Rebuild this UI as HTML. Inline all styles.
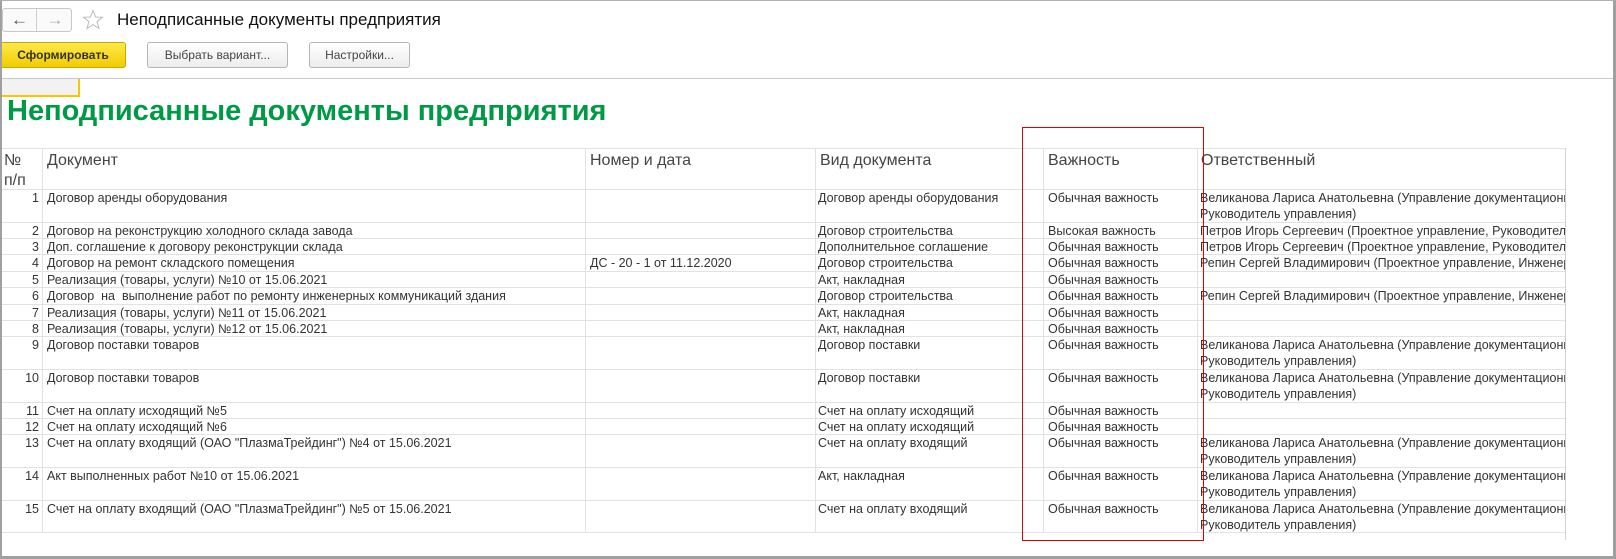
<!DOCTYPE html>
<html><head><meta charset="utf-8"><style>
*{margin:0;padding:0;box-sizing:border-box}
body{width:1616px;height:559px;background:#fff;font-family:"Liberation Sans",Arial,sans-serif;color:#333;position:relative;overflow:hidden}
.frame{position:absolute;left:0;top:0;width:1616px;height:559px;border:2px solid #a0a0a0;border-top:1px solid #b0b0b0;border-right:3px solid #a0a0a0;border-bottom:3px solid #a0a0a0;pointer-events:none;z-index:10}
.nav{position:absolute;left:2px;top:8px;width:70px;height:24px;border:1px solid #c8c8c8;border-radius:3px;background:#fafafa}
.nav div{position:absolute;top:0;height:22px;width:34px;text-align:center;font-size:17px;line-height:21px}
.btn{position:absolute;top:42px;height:26px;border:1px solid #b5b5b5;border-radius:3px;background:linear-gradient(#fff,#ececec);font-size:12px;line-height:24px;text-align:center;color:#444}
.abs{position:absolute;white-space:nowrap}
.t{position:absolute;left:0;top:148px;width:1566px;height:392px;overflow:hidden}
.hl{position:absolute;left:0;width:1566px;height:1px;background:#e2e2e2}
.vl{position:absolute;width:1px;background:#e2e2e2}
.c{position:absolute;font-size:12.5px;line-height:16px;white-space:pre;color:#333}
</style></head><body>
<div class="frame"></div>
<div class="nav"><div style="left:0;border-right:1px solid #d0d0d0;color:#555">&#8592;</div><div style="left:35px;color:#aaa">&#8594;</div></div>
<svg class="abs" style="left:82px;top:9px" width="22" height="22" viewBox="0 0 22 22"><polygon points="11,1.5 13.6,8 20.5,8.3 15.1,12.6 17,19.5 11,15.6 5,19.5 6.9,12.6 1.5,8.3 8.4,8" fill="none" stroke="#bbb" stroke-width="1"/></svg>
<div class="abs" style="left:117px;top:10px;font-size:17px;color:#111">Неподписанные документы предприятия</div>
<div class="btn" style="left:0;width:126px;background:linear-gradient(#ffe94a,#f2cc00);border-color:#c9a800;font-weight:bold;color:#333">Сформировать</div>
<div class="btn" style="left:147px;width:141px">Выбрать вариант...</div>
<div class="btn" style="left:309px;width:101px">Настройки...</div>
<div class="abs" style="left:0;top:78px;width:1616px;height:1px;background:#c8c8c8"></div>
<div class="abs" style="left:0;top:79px;width:80px;height:18px;background:#f2f2f2;border-right:2px solid #f5c800;border-bottom:2px solid #f5c800"></div>
<div class="abs" style="left:7px;top:95px;font-size:29px;font-weight:bold;color:#009a46">Неподписанные документы предприятия</div>
<div class="t" id="t"></div>
<div class="abs" style="left:1022px;top:127px;width:182px;height:414px;border:1px solid #e00000"></div>
<script>
var t=document.getElementById('t');
var cols=[42,585,815,1043,1197];
var rows=[
["1","Договор аренды оборудования","","Договор аренды оборудования","Обычная важность","Великанова Лариса Анатольевна (Управление документационного обеспечения,","Руководитель управления)"],
["2","Договор на реконструкцию холодного склада завода","","Договор строительства","Высокая важность","Петров Игорь Сергеевич (Проектное управление, Руководитель)"],
["3","Доп. соглашение к договору реконструкции склада","","Дополнительное соглашение","Обычная важность","Петров Игорь Сергеевич (Проектное управление, Руководитель)"],
["4","Договор на ремонт складского помещения","ДС - 20 - 1 от 11.12.2020","Договор строительства","Обычная важность","Репин Сергей Владимирович (Проектное управление, Инженер)"],
["5","Реализация (товары, услуги) №10 от 15.06.2021","","Акт, накладная","Обычная важность",""],
["6","Договор  на  выполнение работ по ремонту инженерных коммуникаций здания","","Договор строительства","Обычная важность","Репин Сергей Владимирович (Проектное управление, Инженер)"],
["7","Реализация (товары, услуги) №11 от 15.06.2021","","Акт, накладная","Обычная важность",""],
["8","Реализация (товары, услуги) №12 от 15.06.2021","","Акт, накладная","Обычная важность",""],
["9","Договор поставки товаров","","Договор поставки","Обычная важность","Великанова Лариса Анатольевна (Управление документационного обеспечения,","Руководитель управления)"],
["10","Договор поставки товаров","","Договор поставки","Обычная важность","Великанова Лариса Анатольевна (Управление документационного обеспечения,","Руководитель управления)"],
["11","Счет на оплату исходящий №5","","Счет на оплату исходящий","Обычная важность",""],
["12","Счет на оплату исходящий №6","","Счет на оплату исходящий","Обычная важность",""],
["13","Счет на оплату входящий (ОАО \"ПлазмаТрейдинг\") №4 от 15.06.2021","","Счет на оплату входящий","Обычная важность","Великанова Лариса Анатольевна (Управление документационного обеспечения,","Руководитель управления)"],
["14","Акт выполненных работ №10 от 15.06.2021","","Акт, накладная","Обычная важность","Великанова Лариса Анатольевна (Управление документационного обеспечения,","Руководитель управления)"],
["15","Счет на оплату входящий (ОАО \"ПлазмаТрейдинг\") №5 от 15.06.2021","","Счет на оплату входящий","Обычная важность","Великанова Лариса Анатольевна (Управление документационного обеспечения,","Руководитель управления)"]];
var h='';
h+='<div class="hl" style="top:0"></div>';
var hd=[[4,"№\nп/п"],[47,"Документ"],[590,"Номер и дата"],[820,"Вид документа"],[1048,"Важность"],[1201,"Ответственный"]];
hd.forEach(function(x){h+='<div class="c" style="left:'+x[0]+'px;top:3px;font-size:16px;line-height:20px;color:#444">'+x[1]+'</div>'});
var y=41;h+='<div class="hl" style="top:41px"></div>';
rows.forEach(function(r){var hh=r.length>6?32.6:16.4;
h+='<div class="c" style="left:0;width:39px;text-align:right;top:'+(y+1)+'px">'+r[0]+'</div>';
h+='<div class="c" style="left:47px;top:'+(y+1)+'px">'+r[1]+'</div>';
h+='<div class="c" style="left:590px;top:'+(y+1)+'px">'+r[2]+'</div>';
h+='<div class="c" style="left:818px;top:'+(y+1)+'px">'+r[3]+'</div>';
h+='<div class="c" style="left:1048px;top:'+(y+1)+'px">'+r[4]+'</div>';
h+='<div class="c" style="left:1200px;top:'+(y+1)+'px">'+r[5]+(r[6]?'\n'+r[6]:'')+'</div>';
y+=hh;h+='<div class="hl" style="top:'+Math.round(y)+'px"></div>';});
cols.forEach(function(x){h+='<div class="vl" style="left:'+x+'px;top:0;height:'+Math.round(y)+'px"></div>'});
h+='<div class="vl" style="left:1565px;top:0;height:392px;background:#d0d0d0"></div>';
t.innerHTML=h;
</script>
</body></html>
